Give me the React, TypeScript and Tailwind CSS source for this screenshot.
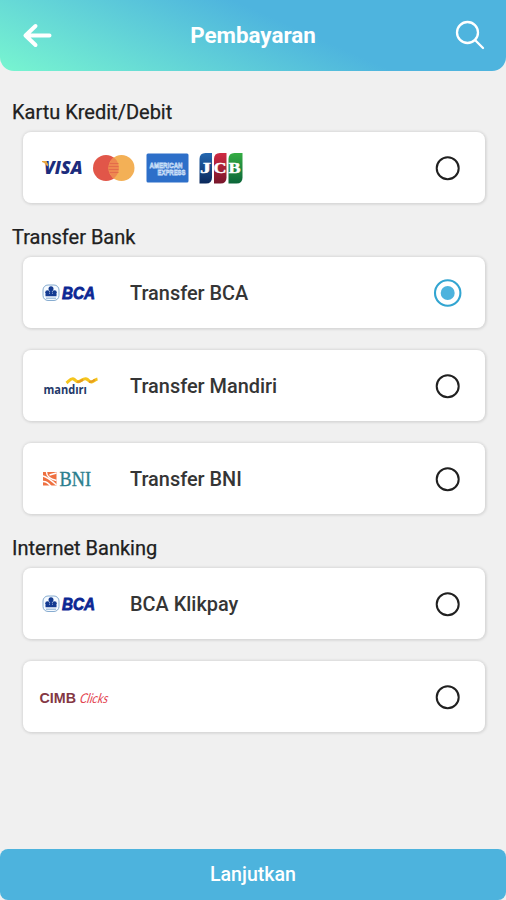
import type { ReactNode } from "react";

function Visa() {
  return (
    <svg width="42" height="24" viewBox="0 -3 42 24" className="shrink-0 overflow-visible">
      <text x="2" y="15" fontFamily="Open Sans, sans-serif" fontWeight="800" fontStyle="italic" fontSize="17" textLength="38.500" lengthAdjust="spacingAndGlyphs" fill="#1c2c7c">VISA</text>
      <path d="M0 2h4.500l2 4-1.300 1.500C4.200 5.500 2.500 3.500 0 3z" fill="#e9a63f" />
    </svg>
  );
}

function Mastercard() {
  return (
    <svg width="44" height="28" viewBox="0 0 44 28" className="ml-2 shrink-0">
      <circle cx="14" cy="14" r="13" fill="#e15649" />
      <circle cx="29.500" cy="14" r="13" fill="#f3b056" />
      <path d="M21.750 3.600a13 13 0 0 1 0 20.800a13 13 0 0 1 0-20.800z" fill="#ee8850" />
      <path d="M17.500 9.500h9M16.500 12.500h10M16.500 15.500h10M17.500 18.500h9" stroke="#e46c4a" strokeWidth="1.200" />
    </svg>
  );
}

function Amex() {
  return (
    <svg width="43" height="30" viewBox="0 0 43 30" className="ml-[10px] shrink-0 overflow-visible">
      <rect x=".5" y=".5" width="42" height="29" rx="1.500" fill="#2d6fc9" />
      <g fill="#2d6fc9" stroke="#c8def7" strokeWidth=".8" fontFamily="Liberation Sans, sans-serif" fontWeight="700" fontSize="8">
        <text x="3.500" y="14.500" textLength="33" lengthAdjust="spacingAndGlyphs">AMERICAN</text>
        <text x="11.500" y="22" textLength="28" lengthAdjust="spacingAndGlyphs">EXPRESS</text>
      </g>
    </svg>
  );
}

function Jcb() {
  return (
    <svg width="44" height="32" viewBox="0 0 44 32" className="ml-[10px] shrink-0 overflow-visible">
      <defs>
        <linearGradient id="jb" x1="0" y1="0" x2="0" y2="1"><stop stopColor="#2468b1" /><stop offset="1" stopColor="#0b285b" /></linearGradient>
        <linearGradient id="jr" x1="0" y1="0" x2="0" y2="1"><stop stopColor="#d02a43" /><stop offset="1" stopColor="#77172b" /></linearGradient>
        <linearGradient id="jg" x1="0" y1="0" x2="0" y2="1"><stop stopColor="#35ad43" /><stop offset="1" stopColor="#0b6539" /></linearGradient>
      </defs>
      <path d="M.5 31.500V7q0-6 6-6h6.500v24.500q0 6-6 6z" fill="url(#jb)" />
      <path d="M15 31.500V7q0-6 6-6h6.500v24.500q0 6-6 6z" fill="url(#jr)" />
      <path d="M29.500 31.500V7q0-6 6-6h8v24.500q0 6-6 6z" fill="url(#jg)" />
      <g fill="#fff" stroke="#fff" strokeWidth=".4" fontFamily="Liberation Serif, serif" fontWeight="700" fontSize="14">
        <text x="1" y="20.500" textLength="11" lengthAdjust="spacingAndGlyphs">J</text>
        <text x="14.500" y="20.500" textLength="13" lengthAdjust="spacingAndGlyphs">C</text>
        <text x="29.500" y="20.500" textLength="12" lengthAdjust="spacingAndGlyphs">B</text>
      </g>
    </svg>
  );
}

function Bca() {
  return (
    <svg width="54" height="24" viewBox="0 -2 54 24" className="shrink-0 overflow-visible">
      <rect x="1" y="2" width="16" height="15.500" rx="5" fill="#f5faff" stroke="#87acd0" strokeWidth="1" />
      <g fill="#143a91">
        <circle cx="9" cy="5.800" r="2.500" />
        <circle cx="5.500" cy="9.500" r="2.300" />
        <circle cx="12.500" cy="9.500" r="2.300" />
        <path d="M8.300 6h1.400l.5 5h4.300v2.200h-11V11h4.300z" />
      </g>
      <path d="M4 15.200h10" stroke="#87acd0" strokeWidth="1" />
      <text x="20" y="16" fontFamily="Liberation Sans, sans-serif" fontWeight="700" fontStyle="italic" fontSize="16" textLength="33" lengthAdjust="spacingAndGlyphs" fill="#0c2793" stroke="#0c2793" strokeWidth=".8">BCA</text>
    </svg>
  );
}

function Mandiri() {
  return (
    <svg width="58" height="24" viewBox="0 -1 58 24" className="shrink-0 overflow-visible">
      <text x="1.500" y="18.500" fontFamily="Open Sans, sans-serif" fontWeight="700" fontSize="12.500" textLength="43.500" lengthAdjust="spacingAndGlyphs" fill="#243869">mandırı</text>
      <path d="M24.500 8C27 6 29 3 31.500 4s3 3.500 5.500 2.500 5-3.500 7.500-2.500 3 3.500 5 3 3.500-2.500 6-3" fill="none" stroke="#f5c51d" strokeWidth="3" />
      <path d="M35 6.800c3 .5 4-1 6-2M47 6.800c3 .5 4-1 6-2" fill="none" stroke="#e79d20" strokeWidth="2.200" />
    </svg>
  );
}

function Bni() {
  return (
    <svg width="50" height="24" viewBox="0 -2 50 24" className="shrink-0 overflow-visible">
      <rect x="1" y="3" width="13.500" height="13.500" fill="#ee7040" />
      <path d="M1 7c4 1 9 5 13.500 9M4.500 3c0 4 4 7 10 8.500M1 12.500c4 0 6 2 8 5M7.500 6l7-2" stroke="#fff" strokeWidth="1.400" fill="none" />
      <text x="17.500" y="16.500" fontFamily="Liberation Serif, serif" fontSize="20" textLength="31.500" lengthAdjust="spacingAndGlyphs" fill="#2d7f8f" stroke="#2d7f8f" strokeWidth=".35">BNI</text>
    </svg>
  );
}

function Cimb() {
  return (
    <svg width="74" height="24" viewBox="0 -3 74 24" className="shrink-0 overflow-visible">
      <text x="-0.500" y="15" fontFamily="Liberation Sans, sans-serif" fontWeight="700" fontSize="14" textLength="36.500" lengthAdjust="spacingAndGlyphs" fill="#843744">CIMB</text>
      <text x="39" y="15" transform="translate(3.500 0) skewX(-12)" fontFamily="Lato, sans-serif" fontStyle="italic" fontSize="13.500" textLength="28" lengthAdjust="spacingAndGlyphs" fill="#e34450">Clicks</text>
    </svg>
  );
}

function Radio({ checked }: { checked?: boolean }) {
  return (
    <svg width="30" height="30" viewBox="0 0 30 30" className="ml-auto shrink-0">
      {checked ? (
        <>
          <circle cx="14.700" cy="15" r="12.700" fill="none" stroke="#32a5d1" strokeWidth="2.100" />
          <circle cx="14.700" cy="15" r="7" fill="#4db3dd" />
        </>
      ) : (
        <circle cx="14.700" cy="15.300" r="11" fill="none" stroke="#202020" strokeWidth="2" />
      )}
    </svg>
  );
}

function Card({ children, label, checked }: { children: ReactNode; label?: string; checked?: boolean }) {
  return (
    <div className="flex h-[71px] items-center rounded-lg bg-white pr-[22px] pl-[17px] shadow-[0_0_3px_1px_rgba(0,0,0,0.08),1px_1px_3px_1px_rgba(0,0,0,0.05)]">
      <div className={label ? "flex w-[90px] items-center pl-[2px]" : "flex items-center"}>{children}</div>
      {label && <span className="pt-0.5 text-[19.900px] leading-6 font-medium whitespace-nowrap text-[#353535]">{label}</span>}
      <Radio checked={checked} />
    </div>
  );
}

function Section({ title, children }: { title: string; children: ReactNode }) {
  return (
    <section>
      <h2 className="flex h-[33px] items-center pl-3 text-[20px] leading-6 font-normal text-[#202020] [-webkit-text-stroke:0.25px_#202020]">{title}</h2>
      <div className="flex flex-col gap-[22px] pt-1 pr-[21px] pl-[23px]">{children}</div>
    </section>
  );
}

export default function App() {
  return (
    <div className="flex h-[900px] w-full flex-col bg-[#f0f0f0] font-[Roboto,sans-serif]">
      <header className="flex h-[71px] shrink-0 items-center justify-between rounded-b-[14px] bg-[linear-gradient(24deg,#78f5d0_0%,#4eb4de_59%)] pr-[20px] pb-px pl-[22px]">
        <svg width="30" height="28" viewBox="0 0 30 28" fill="none" stroke="#fff" strokeWidth="4" strokeLinecap="round" strokeLinejoin="round">
          <path d="M27.500 14.500H3.500M13.500 5L3.500 14.500l10 9.500" />
        </svg>
        <h1 className="text-[22.400px] leading-7 font-bold text-white">Pembayaran</h1>
        <svg width="32" height="32" viewBox="0 0 32 32" fill="none" stroke="#fff" strokeWidth="2.300" strokeLinecap="round">
          <circle cx="13.500" cy="13.500" r="10.500" />
          <path d="M21 21l8 8" />
        </svg>
      </header>
      <main className="flex flex-1 flex-col gap-[17px] pt-[24px]">
        <Section title="Kartu Kredit/Debit">
          <Card>
            <div className="flex items-center pl-[2px]">
              <Visa />
              <Mastercard />
              <Amex />
              <Jcb />
            </div>
          </Card>
        </Section>
        <Section title="Transfer Bank">
          <Card label="Transfer BCA" checked><Bca /></Card>
          <Card label="Transfer Mandiri"><Mandiri /></Card>
          <Card label="Transfer BNI"><Bni /></Card>
        </Section>
        <Section title="Internet Banking">
          <Card label="BCA Klikpay"><Bca /></Card>
          <Card><Cimb /></Card>
        </Section>
      </main>
      <button className="h-[51px] shrink-0 rounded-lg bg-[#4db3dd] text-[19.600px] font-medium text-white">Lanjutkan</button>
    </div>
  );
}
